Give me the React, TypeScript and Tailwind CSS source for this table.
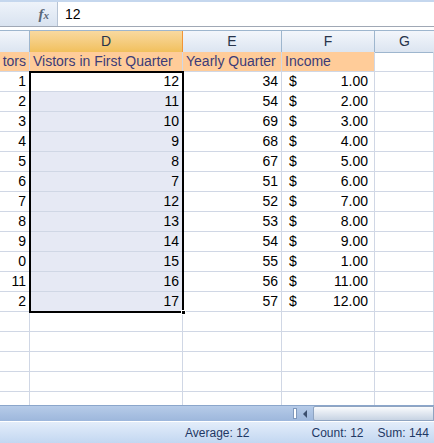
const FONT = "font-['Liberation_Sans',Arial,sans-serif]";

const ROWS = [
  { c: "1", d: "12", e: "34", f: "1.00" },
  { c: "2", d: "11", e: "54", f: "2.00" },
  { c: "3", d: "10", e: "69", f: "3.00" },
  { c: "4", d: "9", e: "68", f: "4.00" },
  { c: "5", d: "8", e: "67", f: "5.00" },
  { c: "6", d: "7", e: "51", f: "6.00" },
  { c: "7", d: "12", e: "52", f: "7.00" },
  { c: "8", d: "13", e: "53", f: "8.00" },
  { c: "9", d: "14", e: "54", f: "9.00" },
  { c: "0", d: "15", e: "55", f: "1.00" },
  { c: "11", d: "16", e: "56", f: "11.00" },
  { c: "2", d: "17", e: "57", f: "12.00" },
];

const COLS = "grid grid-cols-[30px_153px_99px_93px_1fr]";
const cell = "h-[20px] border-r border-b border-[#D0D7E5] px-[3px] flex items-center";

export default function App() {
  return (
    <div className={`w-[434px] h-[443px] overflow-hidden bg-white text-[14px] text-black ${FONT} flex flex-col`}>
      {/* ── Formula bar ── */}
      <div className="h-[27px] shrink-0 flex border-t-2 border-[#C5D7EE] border-b border-b-[#A0A8B5]">
        <div className="w-[58px] bg-gradient-to-b from-[#EEF3FA] to-[#D9E3F0] border-r border-[#B6C3D4] flex items-center justify-end pr-[8px]">
          <span className="font-['Liberation_Serif',serif] italic font-bold text-[#5A6778] text-[15px]">
            f<span className="text-[11px]">x</span>
          </span>
        </div>
        <div className="flex-1 flex items-center pl-[7px] text-[14px]">12</div>
      </div>
      <div className="h-[4px] shrink-0 bg-white border-b border-[#9EB6CE]" />

      {/* ── Sheet ── */}
      <div className="relative flex-1 min-h-0 overflow-hidden">
        {/* column headers */}
        <div className={`${COLS} h-[21px] text-[14px] text-[#27334A]`}>
          <div className="bg-gradient-to-b from-[#F3F6FB] to-[#DCE5F1] border-r border-b border-[#9EB6CE]" />
          <div className="bg-gradient-to-b from-[#F9D99F] to-[#F1C05C] border-r border-b border-[#F29536] flex items-center justify-center">D</div>
          <div className="bg-gradient-to-b from-[#F3F6FB] to-[#DCE5F1] border-r border-b border-[#9EB6CE] flex items-center justify-center">E</div>
          <div className="bg-gradient-to-b from-[#F3F6FB] to-[#DCE5F1] border-r border-b border-[#9EB6CE] flex items-center justify-center">F</div>
          <div className="bg-gradient-to-b from-[#F3F6FB] to-[#DCE5F1] border-b border-[#9EB6CE] flex items-center justify-center">G</div>
        </div>

        {/* label row */}
        <div className={`${COLS} text-[#3C3C78]`}>
          <div className={`${cell} bg-[#FFCC99] justify-end overflow-hidden whitespace-nowrap`}>tors</div>
          <div className={`${cell} bg-[#FFCC99] whitespace-nowrap`}>Vistors in First Quarter</div>
          <div className={`${cell} bg-[#FFCC99] whitespace-nowrap`}>Yearly Quarter</div>
          <div className={`${cell} bg-[#FFCC99]`}>Income</div>
          <div className={cell} />
        </div>

        {/* data */}
        {ROWS.map((r, i) => (
          <div key={i} className={COLS}>
            <div className={`${cell} justify-end`}>{r.c}</div>
            <div className={`${cell} justify-end ${i === 0 ? "bg-white" : "bg-[#E6E9F4]"}`}>{r.d}</div>
            <div className={`${cell} justify-end`}>{r.e}</div>
            <div className={`${cell} justify-between pl-[7px] pr-[6px]`}>
              <span>$</span>
              <span>{r.f}</span>
            </div>
            <div className={cell} />
          </div>
        ))}

        {/* empty rows */}
        {[0, 1, 2, 3, 4].map((i) => (
          <div key={i} className={COLS}>
            <div className={cell} />
            <div className={cell} />
            <div className={cell} />
            <div className={cell} />
            <div className={cell} />
          </div>
        ))}

        {/* selection outline + fill handle */}
        <div className="absolute left-[29px] top-[40px] w-[155px] h-[242px] border-2 border-black pointer-events-none" />
        <div className="absolute left-[181px] top-[279px] w-[5px] h-[5px] bg-black border border-white" />
      </div>

      {/* ── Horizontal scroll row ── */}
      <div className="h-[16px] shrink-0 flex bg-gradient-to-b from-[#B6CBE8] to-[#9DB7DC] border-t border-[#8BA6CB]">
        <div className="w-[293px]" />
        <div className="w-[4px] my-[2px] bg-white border border-[#7F98BC]" />
        <div className="w-[16px] flex items-center justify-center">
          <div className="w-0 h-0 border-y-[4px] border-y-transparent border-r-[4px] border-r-[#3B4F6E]" />
        </div>
        <div className="flex-1 bg-gradient-to-b from-[#FAFBFD] to-[#C7D3E3] border border-[#8FA4C1] rounded-l-[2px]" />
      </div>

      {/* ── Status bar ── */}
      <div className="h-[22px] shrink-0 flex items-center whitespace-nowrap bg-gradient-to-b from-[#E3EDFA] to-[#C3D7F1] border-t border-white text-[12px] text-[#1F3864]">
        <span className="ml-[185px]">Average: 12</span>
        <span className="ml-[62px]">Count: 12</span>
        <span className="ml-[14px]">Sum: 144</span>
      </div>
    </div>
  );
}
